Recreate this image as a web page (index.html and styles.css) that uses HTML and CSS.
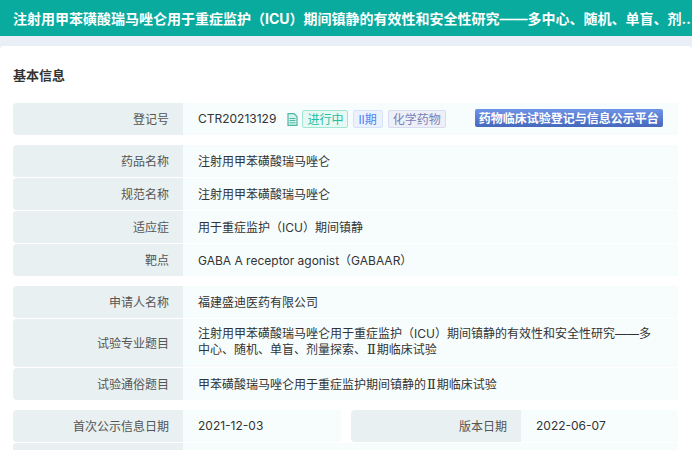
FILE: index.html
```html
<!DOCTYPE html>
<html lang="zh-CN">
<head>
<meta charset="utf-8">
<title>基本信息</title>
<link rel="stylesheet" href="styles.css">
</head>
<body>
<header class="topbar"><h1 class="topbar-title">注射用甲苯磺酸瑞马唑仑用于重症监护（ICU）期间镇静的有效性和安全性研究<span class="dash">——</span>多中心、随机、单盲、剂量探索、II期临床试验</h1></header>
<main class="card">
  <h2 class="section-title">基本信息</h2>
  <div class="group">
    <div class="row"><div class="label">登记号</div><div class="value value-reg">
      <span class="reg-no">CTR20213129</span>
      <svg class="doc-icon" viewBox="0 0 11 13" width="11" height="13"><path d="M1 .6h6l3 3v8.800h-9z" fill="#d6f2ec" stroke="#4fb8a6" stroke-width="1.200"/><path d="M2.500 5.500h6M2.500 7.500h6M2.500 9.800h6" stroke="#4fb8a6" stroke-width="1"/></svg>
      <span class="tag tag-green">进行中</span>
      <span class="tag tag-blue">II期</span>
      <span class="tag tag-purple">化学药物</span>
      <span class="platform">药物临床试验登记与信息公示平台</span>
    </div></div>
  </div>
  <div class="group">
    <div class="row"><div class="label">药品名称</div><div class="value">注射用甲苯磺酸瑞马唑仑</div></div>
    <div class="row"><div class="label">规范名称</div><div class="value">注射用甲苯磺酸瑞马唑仑</div></div>
    <div class="row"><div class="label">适应症</div><div class="value">用于重症监护（ICU）期间镇静</div></div>
    <div class="row"><div class="label">靶点</div><div class="value">GABA A receptor agonist（GABAAR）</div></div>
  </div>
  <div class="group">
    <div class="row"><div class="label">申请人名称</div><div class="value">福建盛迪医药有限公司</div></div>
    <div class="row"><div class="label">试验专业题目</div><div class="value value-multi">注射用甲苯磺酸瑞马唑仑用于重症监护（ICU）期间镇静的有效性和安全性研究<span class="dash">——</span>多中心、随机、单盲、剂量探索、<span class="roman">Ⅱ</span>期临床试验</div></div>
    <div class="row"><div class="label">试验通俗题目</div><div class="value"><span>甲苯磺酸瑞马唑仑用于重症监护期间镇静的<span class="roman">Ⅱ</span>期临床试验</span></div></div>
  </div>
  <div class="group">
    <div class="row row-split">
      <div class="pair"><div class="label">首次公示信息日期</div><div class="value">2021-12-03</div></div>
      <div class="pair pair-right"><div class="label">版本日期</div><div class="value">2022-06-07</div></div>
    </div>
    <div class="row"><div class="label"></div><div class="value"></div></div>
  </div>
</main>
</body>
</html>
```
FILE: styles.css
```css
* { box-sizing: border-box; }
html, body { margin: 0; padding: 0; height: 450px; overflow: hidden; }
body {
  background: #eaeff7;
  font-family: Inter, "Noto Sans CJK SC", sans-serif;
  font-size: 12px;
  color: #333;
}
.dash { font-family: "Liberation Sans", sans-serif; line-height: 1; }
.roman { font-family: "DejaVu Serif", serif; font-size: 13px; line-height: 1; margin: 0 1px; }
.topbar {
  height: 36px;
  background: #09ab9f;
  padding: 0 0 0 13px;
  display: flex;
  align-items: center;
  overflow: hidden;
}
.topbar-title {
  flex: 0 0 687px;
  margin: 0;
  font-size: 14px;
  font-weight: 700;
  color: #fff;
  white-space: nowrap;
  overflow: hidden;
  text-overflow: ellipsis;
}
.card {
  margin-top: 10px;
  background: #fff;
  border-radius: 4px 4px 0 0;
  padding: 20px 14px 0 13px;
}
.section-title {
  margin: 0 0 19px;
  font-size: 13px;
  line-height: 18px;
  font-weight: 700;
  color: #333;
}
.group { display: flex; flex-direction: column; gap: 1px; margin-bottom: 10px; }
.row { display: flex; min-height: 32px; }
.row-split { gap: 10px; }
.pair { display: flex; flex: 1 1 0; }
.pair-right { flex: 0 0 327px; }
.pair-right .value { flex: 1; }
.label {
  flex: 0 0 170px;
  background: #e8f0f1;
  border-radius: 4px 0 0 4px;
  padding: 0 14px 2px 0;
  display: flex;
  align-items: center;
  justify-content: flex-end;
  color: #555;
}
.value {
  flex: 1;
  background: #f7fdfd;
  padding: 0 15px 2px;
  display: flex;
  align-items: center;
  color: #333;
}
.value-multi { display: block; padding: 7px 20px 9px 15px; line-height: 16px; }
.value-reg { padding: 0 0 0 15px; }
.reg-no { margin-bottom: 2px; }
.doc-icon { margin-left: 11px; flex: none; }
.tag {
  flex: none;
  height: 18px;
  margin-left: 4px;
  padding: 0 4px 2px;
  border: 1px solid;
  border-radius: 2px;
  display: inline-flex;
  align-items: center;
  font-size: 12px;
  white-space: nowrap;
}
.tag-green { color: #1fbf9f; background: #e8f9f5; border-color: #9fe6d4; }
.tag-blue { color: #4d84f0; background: #ebf2fe; border-color: #d5e3fb; padding-right: 5px; margin-left: 5px; }
.tag-purple { color: #7a80b8; background: #eef0f8; border-color: #d9dcf0; margin-left: 5px; }
.platform {
  flex: none;
  margin: 0 0 2px 29px;
  height: 18px;
  padding: 0 4px 2px;
  width: 188px;
  justify-content: center;
  border-radius: 2px;
  background: linear-gradient(#6f93e6, #4468bb);
  color: #fff;
  font-weight: 700;
  display: inline-flex;
  align-items: center;
  white-space: nowrap;
}
```
